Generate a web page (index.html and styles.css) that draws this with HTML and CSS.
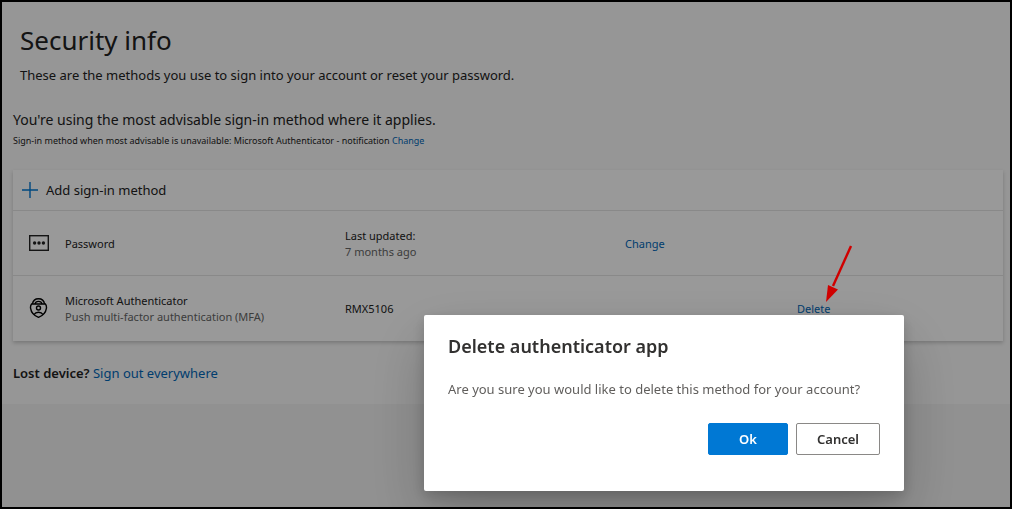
FILE: index.html
```
<!DOCTYPE html>
<html lang="en">
<head>
    <meta charset="UTF-8">
    <meta name="viewport" content="width=device-width, initial-scale=1.0">
    <title>Security info</title>
    <link rel="stylesheet" href="styles.css">
</head>
<body>
    <main class="page">
        <header class="page-header">
            <h1>Security info</h1>
            <p>These are the methods you use to sign into your account or reset your password.</p>
        </header>

        <section class="default-method">
            <p class="advice">You're using the most advisable sign-in method where it applies.</p>
            <p class="fallback">Sign-in method when most advisable is unavailable: Microsoft Authenticator - notification <a href="#">Change</a></p>
        </section>

        <section class="card">
            <button type="button" class="add-method">
                <svg width="16" height="16" viewBox="0 0 16 16" fill="none" stroke="#0078d4" aria-hidden="true">
                    <path d="M8 0V16M0 8H16" stroke-width="1.4"/>
                </svg>
                Add sign-in method
            </button>
            <table class="methods">
                <colgroup>
                    <col class="col-icon">
                    <col class="col-name">
                    <col class="col-detail">
                    <col class="col-change">
                    <col>
                </colgroup>
                <tbody>
                    <tr>
                        <td class="icon">
                            <svg width="20" height="16" viewBox="0 0 20 16" aria-hidden="true">
                                <rect x="0.7" y="0.7" width="18.6" height="14.6" fill="none" stroke="#222" stroke-width="1.4"/>
                                <circle cx="5.6" cy="8" r="1.7" fill="#222"/>
                                <circle cx="10" cy="8" r="1.7" fill="#222"/>
                                <circle cx="14.4" cy="8" r="1.7" fill="#222"/>
                            </svg>
                        </td>
                        <td>Password</td>
                        <td>Last updated:<br><span class="muted">7 months ago</span></td>
                        <td><a href="#">Change</a></td>
                        <td></td>
                    </tr>
                    <tr>
                        <td class="icon">
                            <svg width="20" height="20" viewBox="0 0 20 20" fill="none" stroke="#000" stroke-width="1.4" aria-hidden="true">
                                <path d="M2.6 6H16.4C17.4 7.3 17.7 8.6 17.4 10.4C16.8 14.5 14 17.6 9.5 19.3C5 17.6 2.2 14.5 1.600 10.4C1.300 8.600 1.600 7.300 2.600 6Z"/>
                                <path d="M3.4 6C4 2.6 6.3 0.7 9.5 0.7S15 2.6 15.6 6"/>
                                <path d="M6 6C6.4 4.2 7.7 3.4 9.5 3.4S12.6 4.2 13 6"/>
                                <circle cx="9.5" cy="10" r="2"/>
                                <path d="M5 16.5C6 14.9 7.6 14.200 9.5 14.200S13 14.900 14 16.500"/>
                            </svg>
                        </td>
                        <td>Microsoft Authenticator<br><span class="muted">Push multi-factor authentication (MFA)</span></td>
                        <td>RMX5106</td>
                        <td></td>
                        <td>
                            <span class="pointed">
                                <a href="#">Delete</a>
                                <svg class="arrow" width="28" height="58" viewBox="0 0 28 58" aria-hidden="true">
                                    <path d="M26 1L8 41" stroke="#d00000" stroke-width="2.4"/>
                                    <path d="M1 57L3 40L13 44.5Z" fill="#d00000"/>
                                </svg>
                            </span>
                        </td>
                    </tr>
                </tbody>
            </table>
        </section>

        <p class="lost-device"><strong>Lost device?</strong> <a href="#">Sign out everywhere</a></p>
    </main>

    <div class="overlay">
        <div class="dialog" role="dialog" aria-modal="true" aria-labelledby="dialog-title">
            <h2 id="dialog-title">Delete authenticator app</h2>
            <p>Are you sure you would like to delete this method for your account?</p>
            <div class="dialog-actions">
                <button type="button" class="btn btn-primary">Ok</button>
                <button type="button" class="btn">Cancel</button>
            </div>
        </div>
    </div>
</body>
</html>
```
FILE: styles.css
```
* {
    box-sizing: border-box;
}

body {
    margin: 0;
    min-height: 100vh;
    background: #f2f2f2;
    color: #222;
    font-family: "Segoe UI", "Noto Sans", sans-serif;
    font-size: 11px;
    line-height: 16px;
}

h1, h2, p {
    margin: 0;
    font-weight: 400;
}

a {
    color: #0067b8;
    text-decoration: none;
}

.page {
    padding: 23px 9px 21px 13px;
    background: #fafafa;
}

.page-header {
    padding-left: 7px;
}

.page-header h1 {
    font-size: 26px;
    line-height: 34px;
}

.page-header p {
    margin-top: 8px;
    font-size: 13px;
    line-height: 20px;
}

.default-method {
    margin-top: 25px;
}

.advice {
    font-size: 14px;
    line-height: 20px;
}

.fallback {
    margin-top: 3px;
    font-size: 9px;
}

.card {
    margin-top: 21px;
    background: #fff;
    box-shadow: 0 2px 4px rgba(0, 0, 0, 0.2);
}

.add-method {
    display: flex;
    align-items: center;
    gap: 8px;
    width: 100%;
    height: 40px;
    padding: 0 9px;
    border: 0;
    background: none;
    color: #222;
    font-family: inherit;
    font-size: 13px;
}

.methods {
    width: 100%;
    table-layout: fixed;
    border-collapse: collapse;
}

.col-icon {
    width: 52px;
}

.col-name,
.col-detail {
    width: 280px;
}

.col-change {
    width: 172px;
}

.methods td {
    height: 65px;
    padding: 2px 0 0;
    border-top: 1px solid #e5e5e5;
    vertical-align: middle;
}

.methods .icon {
    padding: 0 0 0 16px;
}

.icon svg {
    display: block;
}

.muted {
    color: #666;
}

.lost-device {
    margin-top: 22px;
    font-size: 13px;
    line-height: 20px;
}

.lost-device strong {
    font-weight: 600;
}

.pointed {
    position: relative;
}

/* stays above the dimmed page */
.arrow {
    position: absolute;
    left: 28px;
    bottom: 13px;
    z-index: 2;
}

.overlay {
    position: fixed;
    inset: 0;
    z-index: 1;
    display: flex;
    justify-content: flex-end;
    align-items: flex-end;
    padding: 16px 106px;
    border: 2px solid #000;
    background: rgba(0, 0, 0, 0.4);
}

.dialog {
    width: 480px;
    max-width: 100%;
    padding: 16px 24px 36px;
    border-radius: 2px;
    background: #fff;
    box-shadow: 0 26px 58px rgba(0, 0, 0, 0.22), 0 5px 14px rgba(0, 0, 0, 0.18);
}

.dialog h2 {
    color: #323130;
    font-size: 18px;
    font-weight: 600;
    line-height: 30px;
}

.dialog p {
    margin-top: 18px;
    color: #605e5c;
    font-size: 13px;
    line-height: 20px;
}

.dialog-actions {
    display: flex;
    justify-content: flex-end;
    gap: 8px;
    margin-top: 24px;
}

.btn {
    min-width: 80px;
    height: 32px;
    padding: 0 20px;
    border: 1px solid #8a8886;
    border-radius: 2px;
    background: #fff;
    color: #323130;
    font-family: inherit;
    font-size: 13px;
    font-weight: 600;
}

.btn-primary {
    border-color: #0078d4;
    background: #0078d4;
    color: #fff;
}
```
